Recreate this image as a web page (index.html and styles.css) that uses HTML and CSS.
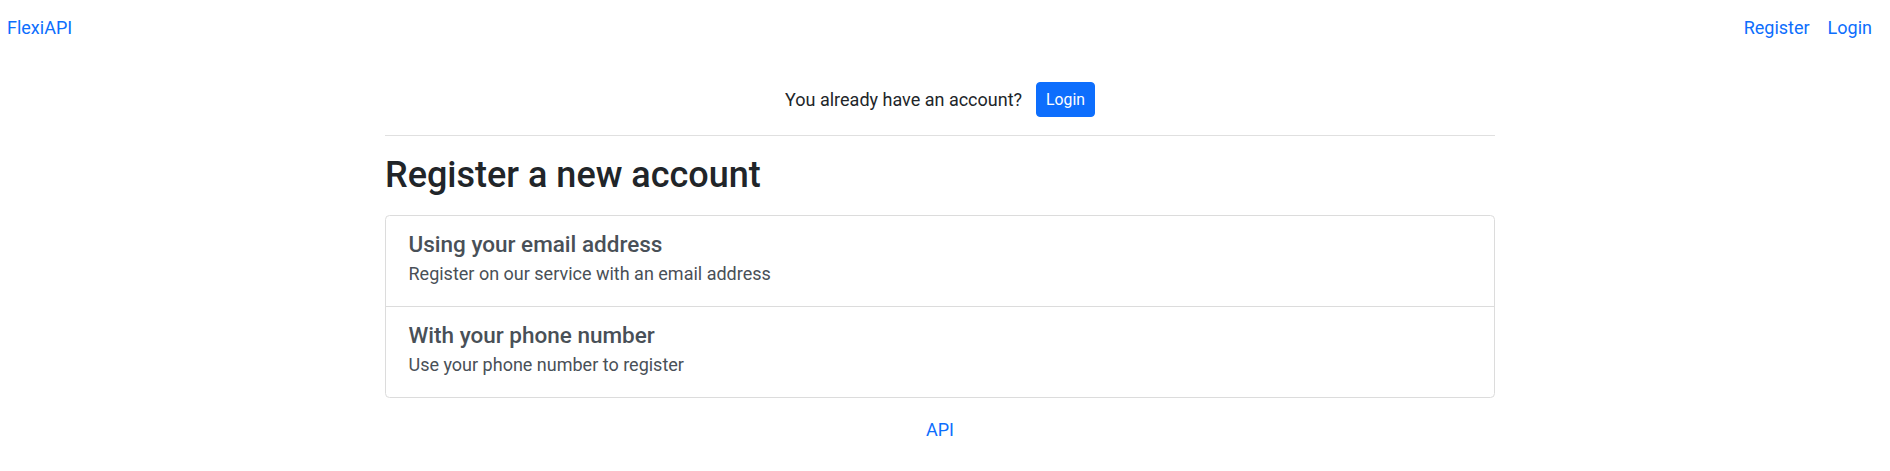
FILE: index.html
```html
<!DOCTYPE html>
<html lang="en">
<head>
<meta charset="utf-8">
<title>FlexiAPI</title>
<link rel="stylesheet" href="styles.css">
</head>
<body>
<nav class="topbar">
  <a class="brand" href="#">FlexiAPI</a>
  <div class="nav-links">
    <a href="#">Register</a>
    <a href="#">Login</a>
  </div>
</nav>
<main class="page">
  <div class="already">
    <span>You already have an account?</span>
    <a class="btn-login" href="#">Login</a>
  </div>
  <hr class="divider">
  <h2 class="title">Register a new account</h2>
  <div class="list">
    <a class="item" href="#">
      <h5 class="item-title">Using your email address</h5>
      <p class="item-text">Register on our service with an email address</p>
    </a>
    <a class="item" href="#">
      <h5 class="item-title">With your phone number</h5>
      <p class="item-text">Use your phone number to register</p>
    </a>
  </div>
  <footer class="footer">
    <a href="#">API</a>
  </footer>
</main>
</body>
</html>
```

FILE: styles.css
```css
html { font-size: 18px; }
body {
  margin: 0;
  font-family: Roboto, "Liberation Sans", sans-serif;
  font-size: 18px;
  line-height: 1.5;
  color: #212529;
  background: #fff;
}
a { color: #0d6efd; text-decoration: none; }

.topbar {
  display: flex;
  justify-content: space-between;
  align-items: center;
  padding: 10px 9px 0 7px;
  height: 35px;
}
.nav-links { display: flex; }
.nav-links a { padding: 0 9px; }

.page {
  width: 1110px;
  margin-left: calc(50% - 560px);
  padding-top: 37px;
}
.already {
  display: flex;
  justify-content: center;
  align-items: center;
  gap: 14px;
}
.btn-login {
  display: inline-block;
  background: #0d6efd;
  color: #fff;
  border: 1px solid #0d6efd;
  border-radius: 4px;
  font-size: 15.75px;
  line-height: 1.5;
  padding: 4.5px 9px;
}
.divider {
  border: 0;
  border-top: 1px solid #e0e0e0;
  margin: 18px 0;
  height: 0;
}
.title {
  font-size: 36px;
  font-weight: 500;
  line-height: 1.2;
  margin: 0 0 18px;
}
.list {
  border: 1px solid #dcdcdc;
  border-radius: 4.5px;
  display: flex;
  flex-direction: column;
}
.item {
  display: block;
  color: #495057;
  padding: 15px 22.5px 18.5px;
}
.item + .item { border-top: 1px solid #dcdcdc; }
.item-title {
  font-size: 22.5px;
  font-weight: 500;
  line-height: 1.2;
  margin: 0 0 2.5px;
}
.item-text {
  margin: 0;
}
.footer {
  text-align: center;
  margin-top: 18px;
}
```
